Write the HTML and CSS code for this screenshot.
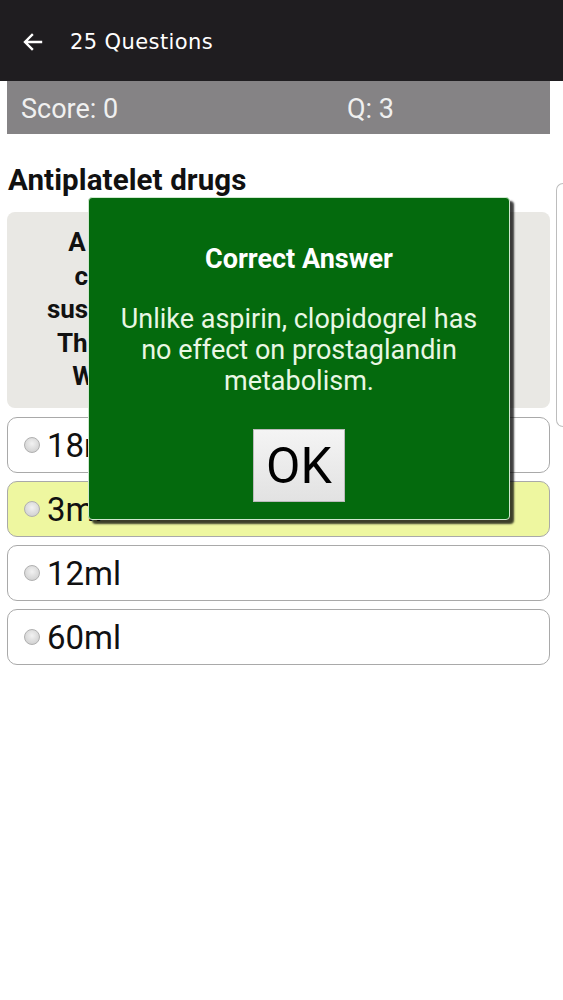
FILE: index.html
```html
<!DOCTYPE html>
<html>
<head>
<meta charset="utf-8">
<link rel="stylesheet" href="styles.css">
</head>
<body>
<div class="appbar">
  <svg class="back" width="24" height="24" viewBox="0 0 24 24"><path d="M20 12H5M11 5l-7 7 7 7" fill="none" stroke="#fff" stroke-width="2.4" stroke-linecap="square"/></svg>
  <div class="apptitle">25 Questions</div>
</div>
<div class="scorebar">
  <div class="score">Score: 0</div>
  <div class="qnum">Q: 3</div>
</div>
<div class="topic">Antiplatelet drugs</div>
<div class="question">A patient is due to be given 45mg of<br>clopidogrel once daily. A pharmacy<br>suspension contains 75mg in each 5ml.<br>The dose is to be given each morning.<br>What volume of suspension is due?</div>
<div class="options">
  <div class="option"><span class="radio"></span><span class="otext">18ml</span></div>
  <div class="option selected"><span class="radio"></span><span class="otext">3ml</span></div>
  <div class="option"><span class="radio"></span><span class="otext">12ml</span></div>
  <div class="option"><span class="radio"></span><span class="otext">60ml</span></div>
</div>
<div class="edge"></div>
<div class="modal">
  <div class="mtitle">Correct Answer</div>
  <div class="mbody">Unlike aspirin, clopidogrel has no effect on prostaglandin metabolism.</div>
  <div class="okbtn">OK</div>
</div>
</body>
</html>
```
FILE: styles.css
```css
html, body { margin: 0; padding: 0; background: #fff; }
body { width: 563px; height: 1000px; position: relative; overflow: hidden; font-family: Roboto, "Liberation Sans", sans-serif; }
.appbar { height: 81px; background: #1f1d20; display: flex; align-items: center; }
.back { margin-left: 21px; margin-top: 2px; }
.apptitle { margin-left: 25px; margin-top: 2px; color: #fff; font-family: "DejaVu Sans", sans-serif; font-size: 21px; letter-spacing: 0.4px; }
.scorebar { margin: 0 13px 0 7px; height: 53px; background: #858385; display: flex; align-items: center; color: #f0f0f0; font-size: 27px; padding-top: 3px; box-sizing: border-box; }
.score { width: 326px; padding-left: 14px; }
.topic { margin: 31px 0 0 8px; font-size: 29.5px; font-weight: bold; color: #111; line-height: 30px; letter-spacing: 0.1px; }
.question { margin: 17px 13px 0 7px; height: 196px; box-sizing: border-box; background: #e9e8e4; border-radius: 8px; padding: 14px 4px; text-align: center; font-weight: bold; font-size: 26px; line-height: 33.5px; color: #111; white-space: nowrap; overflow: hidden; }
.options { margin: 9px 13px 0 7px; display: flex; flex-direction: column; gap: 8px; }
.option { height: 56px; box-sizing: border-box; border: 1px solid #a9a9a9; border-radius: 10px; display: flex; align-items: center; padding-left: 16px; background: #fff; }
.option.selected { background: #eef7a0; }
.radio { width: 16px; height: 16px; border-radius: 50%; border: 1px solid #b0b0b0; background: radial-gradient(circle at 50% 40%, #f2f2f2, #c9c9c9); box-sizing: border-box; }
.otext { margin-left: 7px; font-size: 33px; color: #111; }
.edge { position: absolute; left: 556px; top: 183px; width: 6px; height: 242px; border: 1px solid #bdbdbd; border-right: none; border-radius: 14px 0 0 14px; }
.modal { position: absolute; left: 88px; top: 197px; width: 422px; height: 323px; box-sizing: border-box; background: #046a0d; border: 1px solid #cfe8cf; border-radius: 4px; box-shadow: 4px 4px 2px rgba(0,0,0,0.75); display: flex; flex-direction: column; align-items: center; }
.mtitle { margin-top: 46px; color: #fff; font-weight: bold; font-size: 27px; line-height: 30px; }
.mbody { margin-top: 30px; padding: 0 20px; text-align: center; color: #e9f7e4; font-size: 27px; line-height: 31px; }
.okbtn { margin-top: 32px; width: 92px; height: 73px; box-sizing: border-box; background: linear-gradient(#f4f4f4, #e2e2e2); border: 1px solid #bbb; display: flex; align-items: center; justify-content: center; font-size: 50px; color: #000; }
```
